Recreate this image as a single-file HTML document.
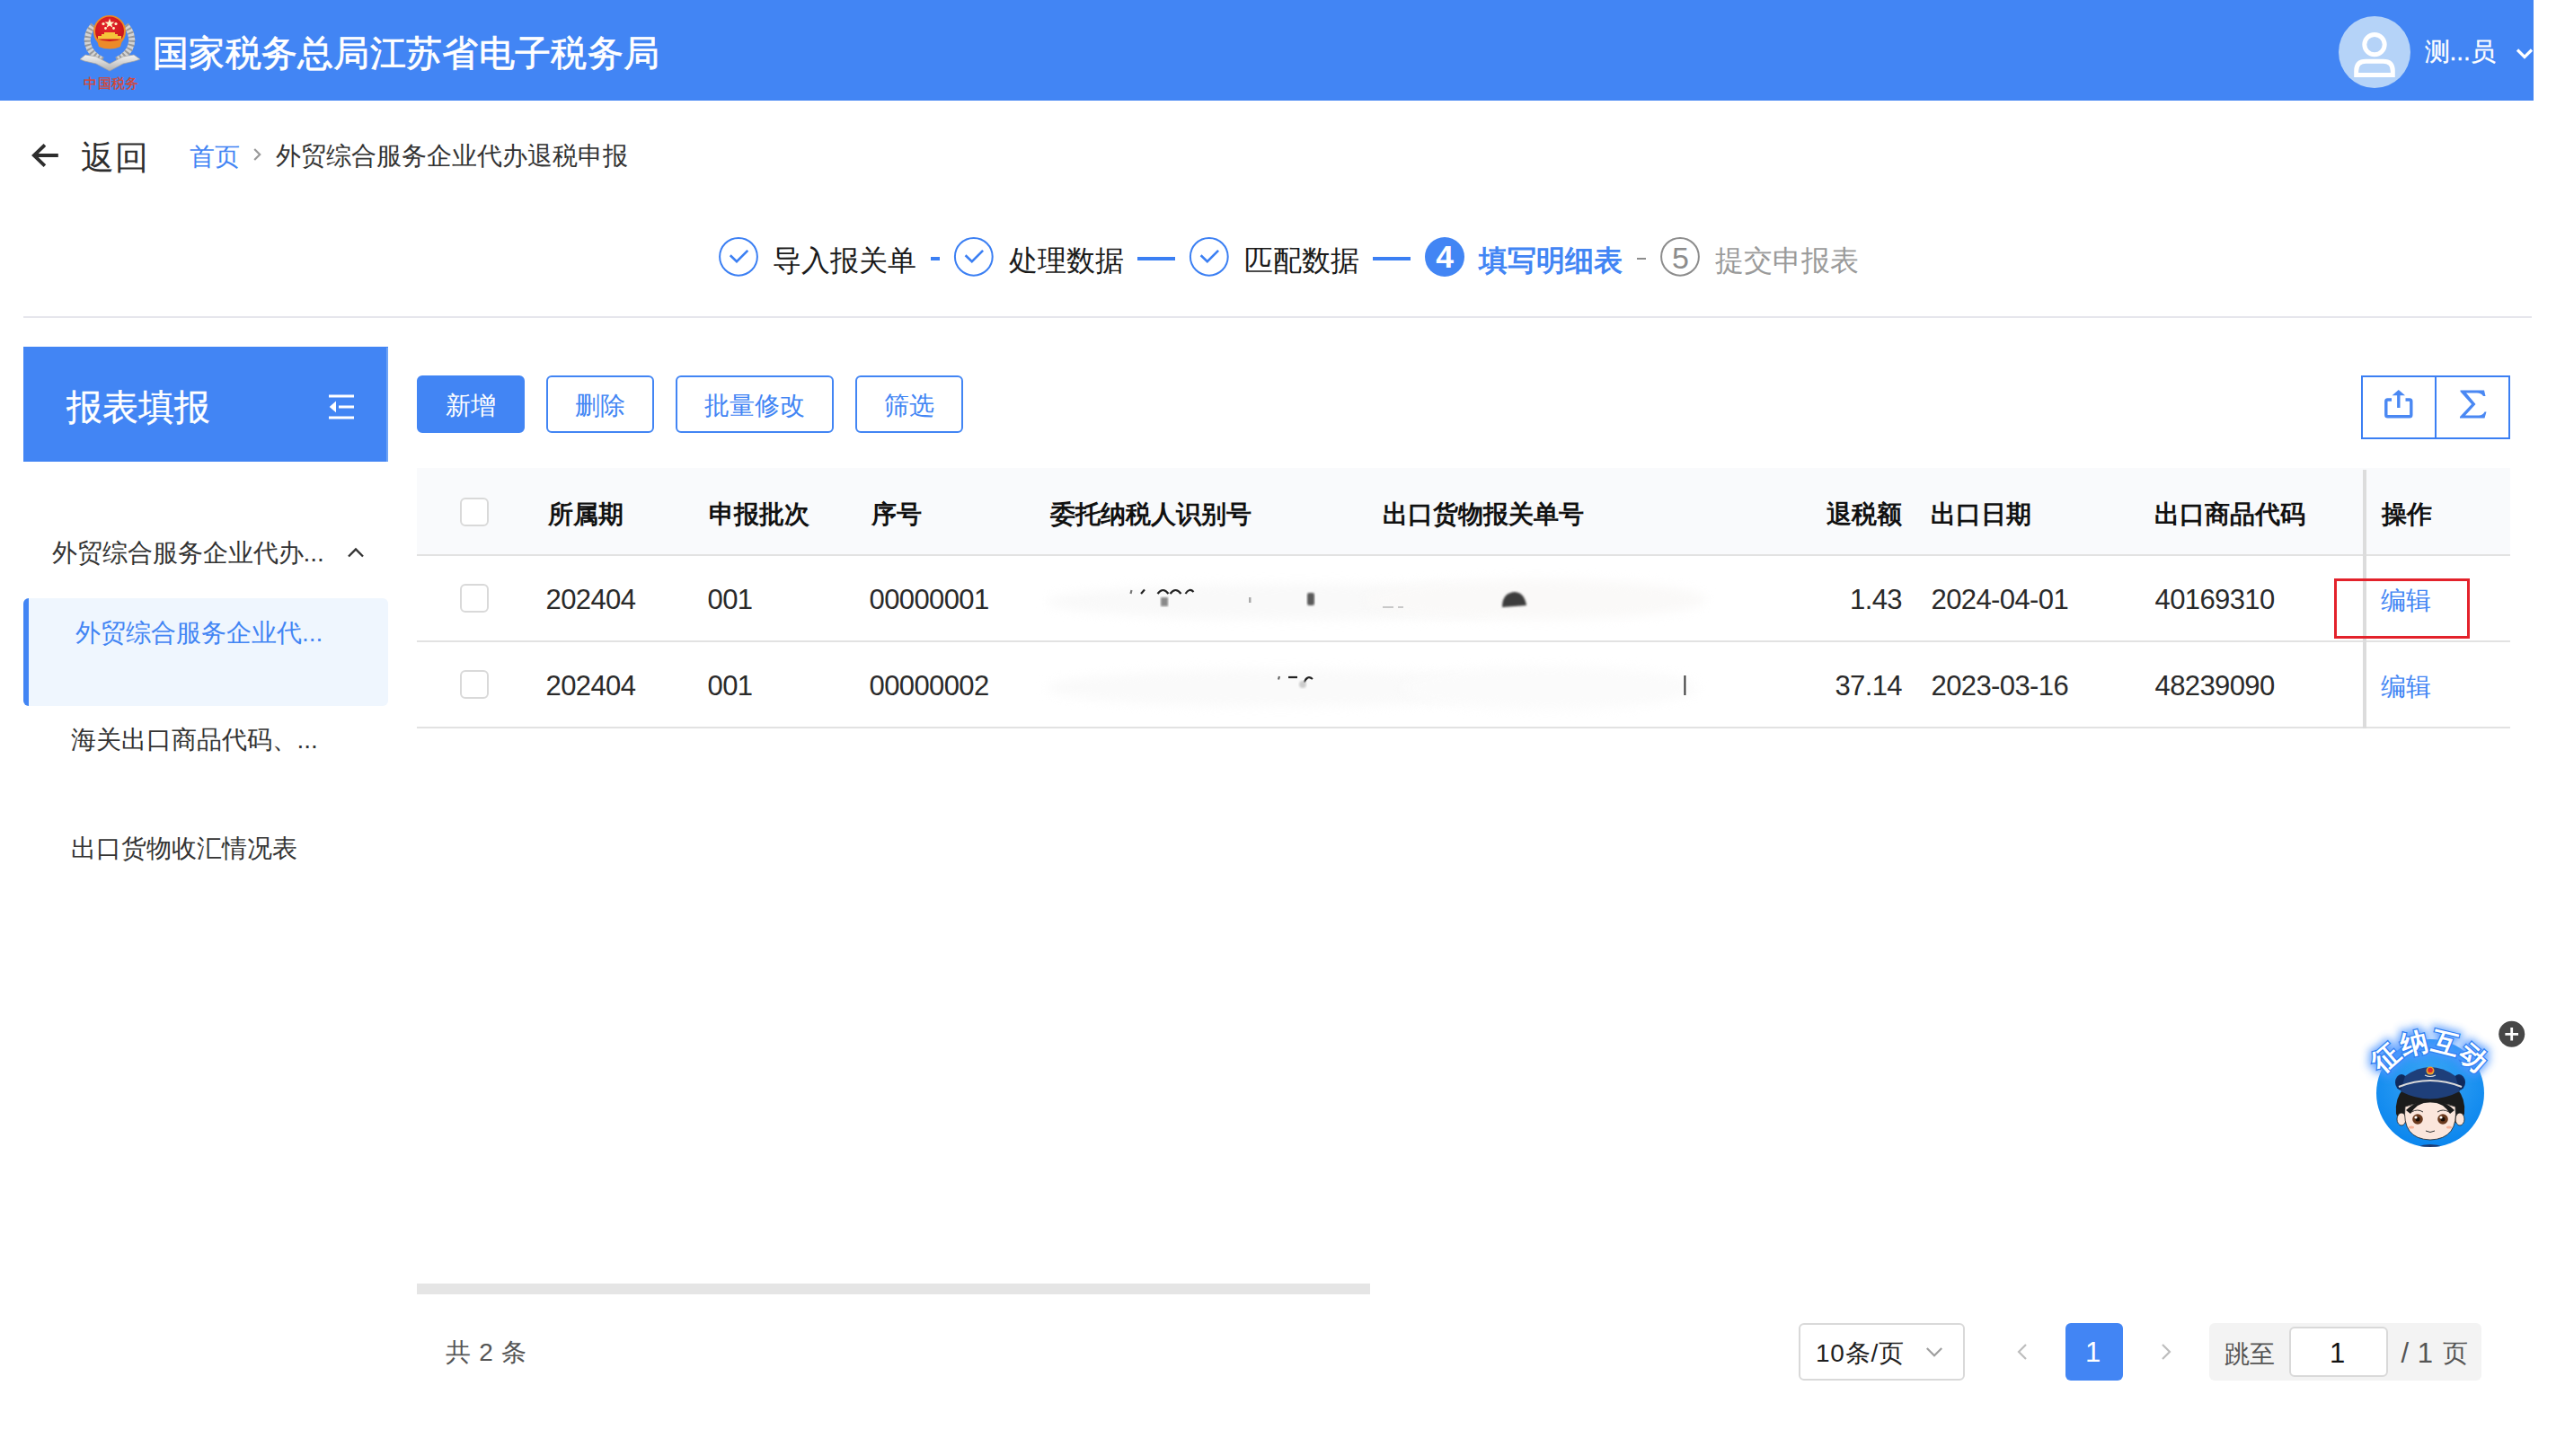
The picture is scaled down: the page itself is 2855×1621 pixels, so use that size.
<!DOCTYPE html>
<html><head><meta charset="utf-8">
<style>
html,body{margin:0;padding:0;background:#fff;}
body{width:2855px;height:1621px;position:relative;overflow:hidden;font-family:"Liberation Sans",sans-serif;color:#333;}
.a{position:absolute;white-space:nowrap;}
svg.a{overflow:visible;}
.t28{font-size:28px;line-height:28px;}
.hdr{left:0;top:0;width:2820px;height:112px;background:#4285f4;}
.btn{position:absolute;top:418px;height:64px;box-sizing:border-box;border:2px solid #4285f4;border-radius:6px;color:#4285f4;font-size:28px;line-height:64px;text-align:center;background:#fff;}
.th{font-size:28px;line-height:28px;font-weight:bold;color:#111;top:559px;}
.td{font-size:31px;line-height:31px;letter-spacing:-0.6px;color:#2a2a2a;}
.cb{position:absolute;left:512px;width:32px;height:32px;box-sizing:border-box;border:2px solid #d9d9d9;border-radius:6px;background:#fff;}
.rowline{position:absolute;left:464px;width:2330px;height:2px;background:#e2e2e2;}
.st{font-size:32px;line-height:32px;color:#1a1a1a;top:273.5px;}
.blob{position:absolute;border-radius:50%;filter:blur(6px);}
</style></head><body>

<!-- ============ header ============ -->
<div class="a hdr"></div>
<!-- emblem -->
<svg class="a" style="left:80px;top:5px" width="90" height="100" viewBox="0 0 90 100">
  <defs>
    <radialGradient id="rg" cx="0.45" cy="0.35" r="0.65"><stop offset="0" stop-color="#e8262c"/><stop offset="1" stop-color="#c5141b"/></radialGradient>
    <linearGradient id="sv" x1="0" y1="0" x2="0" y2="1"><stop offset="0" stop-color="#f4f4f4"/><stop offset="1" stop-color="#b0b0b0"/></linearGradient>
  </defs>
  <path d="M24 23 C13 36 15 53 34 62" fill="none" stroke="#d4d4d4" stroke-width="7"/>
  <path d="M60 23 C71 36 69 53 50 62" fill="none" stroke="#d4d4d4" stroke-width="7"/>
  <path d="M24 23 C13 36 15 53 34 62" fill="none" stroke="#808080" stroke-width="7" stroke-dasharray="2 2.6" opacity="0.7"/>
  <path d="M60 23 C71 36 69 53 50 62" fill="none" stroke="#808080" stroke-width="7" stroke-dasharray="2 2.6" opacity="0.7"/>
  <path d="M9 61 L15 56 L27 58 L42 66 L57 58 L69 56 L76 61 L70 63 L57 66 L42 74 L27 66 L14 63 Z" fill="url(#sv)" stroke="#a0a0a0" stroke-width="0.7"/>
  <circle cx="42" cy="30" r="18" fill="#ef8a24"/>
  <circle cx="42" cy="29.5" r="16" fill="url(#rg)"/>
  <path d="M27.5 38 Q42 44 56.5 38 L54 47 Q42 52 30 47 Z" fill="#ec8a2a"/>
  <path d="M33 33 H51 V35 H55 V38.5 H29 V35 H33 Z" fill="#f5c33a"/>
  <rect x="36" y="31" width="12" height="2" fill="#f5c33a"/>
  <polygon points="42,15.5 43.4,19.5 47.5,19.5 44.2,22 45.4,25.8 42,23.5 38.6,25.8 39.8,22 36.5,19.5 40.6,19.5" fill="#fff7c8"/>
  <circle cx="35" cy="21.5" r="1.6" fill="#fff7c8"/><circle cx="49" cy="21.5" r="1.6" fill="#fff7c8"/>
  <circle cx="37.5" cy="26.5" r="1.4" fill="#fff7c8"/><circle cx="46.5" cy="26.5" r="1.4" fill="#fff7c8"/>
  <text x="44" y="93" text-anchor="middle" font-family="Liberation Serif" font-size="14.5" fill="#d9462e" stroke="#d9462e" stroke-width="0.3" letter-spacing="0.4">中国税务</text>
</svg>
<div class="a" style="left:170px;top:39px;font-size:40px;line-height:40px;color:#fff;letter-spacing:0.3px;-webkit-text-stroke:0.7px #fff;">国家税务总局江苏省电子税务局</div>
<!-- avatar -->
<svg class="a" style="left:2603px;top:18px" width="80" height="80" viewBox="0 0 80 80">
  <circle cx="40" cy="40" r="40" fill="#b5d3f8"/>
  <circle cx="40" cy="31.6" r="11.2" fill="none" stroke="#fff" stroke-width="5"/>
  <path d="M19.7 65.5 V61 Q19.7 50.3 30.4 50.3 H49.6 Q60.3 50.3 60.3 61 V65.5 Z" fill="none" stroke="#fff" stroke-width="5" stroke-linejoin="miter"/>
</svg>
<div class="a" style="left:2698.5px;top:43.5px;font-size:28px;line-height:28px;color:#fff;-webkit-text-stroke:0.3px #fff;">测...员</div>
<svg class="a" style="left:2790px;top:45px" width="30" height="30" viewBox="2790 45 30 30">
  <path d="M2802 55.5 L2810 63.5 L2818 55.5" fill="none" stroke="#fff" stroke-width="3.2"/>
</svg>

<!-- ============ breadcrumb ============ -->
<svg class="a" style="left:25px;top:150px" width="50" height="50" viewBox="25 150 50 50">
  <path d="M37 173 H64.8" fill="none" stroke="#2e2e2e" stroke-width="4"/>
  <path d="M48.5 162.8 L37.8 173 L48.5 183.2" fill="none" stroke="#2e2e2e" stroke-width="3.8" stroke-linecap="square" stroke-linejoin="miter"/>
</svg>
<div class="a" style="left:89.5px;top:157px;font-size:37px;line-height:37px;color:#2e2e2e;letter-spacing:1px;">返回</div>
<div class="a t28" style="left:211px;top:160.5px;color:#4285f4;">首页</div>
<svg class="a" style="left:275px;top:160px" width="20" height="25" viewBox="275 160 20 25">
  <path d="M283.2 166 L289.2 172 L283.2 178" fill="none" stroke="#999" stroke-width="2.2"/>
</svg>
<div class="a t28" style="left:307px;top:159.5px;color:#333;">外贸综合服务企业代办退税申报</div>

<!-- ============ steps ============ -->
<svg class="a" style="left:790px;top:255px" width="1120" height="60" viewBox="790 255 1120 60">
  <g fill="none" stroke="#3b7ff3" stroke-width="2">
    <circle cx="822" cy="285.8" r="20.9"/>
    <circle cx="1083.8" cy="285.8" r="20.9"/>
    <circle cx="1345.8" cy="285.8" r="20.9"/>
  </g>
  <g fill="none" stroke="#3b7ff3" stroke-width="2.6">
    <path d="M812.8 284.2 L820 291.2 L832.3 278.9"/>
    <path d="M1074.6 284.2 L1081.8 291.2 L1094.1 278.9"/>
    <path d="M1336.6 284.2 L1343.8 291.2 L1356.1 278.9"/>
  </g>
  <rect x="1036" y="286" width="10" height="4" fill="#3b7ff3"/>
  <rect x="1266" y="286" width="42" height="4" fill="#3b7ff3"/>
  <rect x="1528" y="286" width="42" height="4" fill="#3b7ff3"/>
  <circle cx="1608" cy="286" r="22" fill="#4285f4"/>
  <rect x="1822" y="287" width="10" height="2" fill="#8c8c8c"/>
  <circle cx="1870" cy="285.8" r="20.9" fill="none" stroke="#8c8c8c" stroke-width="2"/>
</svg>
<div class="a" style="left:1598.3px;top:268.8px;font-size:35.5px;line-height:35.5px;color:#fff;font-weight:bold;">4</div>
<div class="a" style="left:1861px;top:270px;font-size:34px;line-height:34px;color:#8c8c8c;">5</div>
<div class="a st" style="left:859.5px;">导入报关单</div>
<div class="a st" style="left:1122.5px;">处理数据</div>
<div class="a st" style="left:1385px;">匹配数据</div>
<div class="a st" style="left:1646px;color:#4285f4;font-weight:bold;">填写明细表</div>
<div class="a st" style="left:1908.5px;color:#9a9a9a;">提交申报表</div>
<div class="a" style="left:26px;top:352px;width:2792px;height:2px;background:#e6e6ec;"></div>

<!-- ============ sidebar ============ -->
<div class="a" style="left:26px;top:386px;width:406px;height:128px;background:#4285f4;"></div>
<div class="a" style="left:430px;top:387px;width:2px;height:127px;background:#6ea4f6;"></div>
<div class="a" style="left:74px;top:432.5px;font-size:40px;line-height:40px;color:#fff;-webkit-text-stroke:0.4px #fff;">报表填报</div>
<svg class="a" style="left:360px;top:435px" width="40" height="36" viewBox="360 435 40 36">
  <g fill="#fff">
    <rect x="366" y="439.5" width="28" height="3"/>
    <rect x="377" y="451.5" width="17" height="3"/>
    <rect x="366" y="463.5" width="28" height="3"/>
    <polygon points="366.7,453 374,446.6 374,459.2"/>
  </g>
</svg>
<div class="a t28" style="left:57.5px;top:602px;color:#333;">外贸综合服务企业代办...</div>
<svg class="a" style="left:380px;top:600px" width="30" height="25" viewBox="380 600 30 25">
  <path d="M388 619.5 L396 611.5 L404 619.5" fill="none" stroke="#333" stroke-width="2.4"/>
</svg>
<div class="a" style="left:26px;top:666px;width:406px;height:120px;background:#eff6fe;border-radius:6px;overflow:hidden;"><div style="position:absolute;left:0;top:0;width:6px;height:120px;background:#4285f4;"></div></div>
<div class="a t28" style="left:84px;top:690.5px;color:#4285f4;">外贸综合服务企业代...</div>
<div class="a t28" style="left:78.5px;top:809.5px;color:#333;">海关出口商品代码、...</div>
<div class="a t28" style="left:78.5px;top:930.5px;color:#333;">出口货物收汇情况表</div>

<!-- ============ toolbar ============ -->
<div class="btn" style="left:464px;width:120px;background:#4285f4;color:#fff;">新增</div>
<div class="btn" style="left:608px;width:120px;">删除</div>
<div class="btn" style="left:752px;width:176px;">批量修改</div>
<div class="btn" style="left:952px;width:120px;">筛选</div>
<svg class="a" style="left:2620px;top:410px" width="180" height="90" viewBox="2620 410 180 90">
  <rect x="2629" y="419" width="164" height="69" fill="none" stroke="#3b7ff3" stroke-width="2"/>
  <rect x="2710" y="418" width="2" height="71" fill="#3b7ff3"/>
  <g fill="none" stroke="#4a88f3" stroke-width="3.4">
    <path d="M2662 445 H2657.5 Q2655.8 445 2655.8 446.8 V462 Q2655.8 463.8 2657.5 463.8 H2682 Q2683.8 463.8 2683.8 462 V446.8 Q2683.8 445 2682 445 H2677.5"/>
    <path d="M2669.8 454 V438.5"/>
  </g>
  <polygon points="2669.8,434 2677,440.3 2662.6,440.3" fill="#4a88f3"/>
  <path d="M2738.5 434.5 H2765 L2766.5 441 L2764 441 Q2762 437.5 2757 437.5 H2745 L2755.5 450 L2744 462.5 H2759 Q2763.5 462.5 2765.5 458.5 L2767.5 458.5 L2765.5 465.5 H2738 V464 L2751 450 L2738.5 436 Z" fill="#4a88f3"/>
</svg>

<!-- ============ table ============ -->
<div class="a" style="left:464px;top:521px;width:2330px;height:96px;background:#f9fafc;"></div>
<div class="rowline" style="top:617px;"></div>
<div class="rowline" style="top:713px;"></div>
<div class="rowline" style="top:809px;"></div>
<div class="a" style="left:2630px;top:523px;width:4px;height:288px;background:#dcdcdc;"></div>
<div class="cb" style="top:554px;"></div>
<div class="cb" style="top:650px;"></div>
<div class="cb" style="top:746px;"></div>

<div class="a th" style="left:609.5px;">所属期</div>
<div class="a th" style="left:788.5px;">申报批次</div>
<div class="a th" style="left:969.5px;">序号</div>
<div class="a th" style="left:1169px;">委托纳税人识别号</div>
<div class="a th" style="left:1538.5px;">出口货物报关单号</div>
<div class="a th" style="left:2032.5px;">退税额</div>
<div class="a th" style="left:2148.5px;">出口日期</div>
<div class="a th" style="left:2398px;">出口商品代码</div>
<div class="a th" style="left:2651px;">操作</div>

<!-- redacted blur row1 -->
<div class="blob" style="left:1165px;top:650px;width:560px;height:40px;background:#f9f9f9;"></div>
<div class="blob" style="left:1520px;top:645px;width:380px;height:45px;background:#faf9f8;"></div>
<div class="blob" style="left:1165px;top:745px;width:520px;height:42px;background:#fafafa;"></div>
<div class="blob" style="left:1560px;top:742px;width:330px;height:48px;background:#fbfbfb;"></div>

<svg class="a" style="left:1240px;top:640px" width="660" height="150" viewBox="1240 640 660 150">
  <defs><filter id="bl1"><feGaussianBlur stdDeviation="1"/></filter><filter id="bl2"><feGaussianBlur stdDeviation="0.6"/></filter></defs>
  <g fill="none" stroke="#222" stroke-width="2.2" filter="url(#bl2)">
    <path d="M1258.5 661 L1259.5 657" stroke="#777"/>
    <path d="M1270 661 L1274 656.5"/>
    <path d="M1288.5 661 Q1294.5 653 1300.5 661"/>
    <path d="M1302.5 661 Q1308.5 653 1314.5 661"/>
    <path d="M1319.5 661 Q1324 654 1328.5 659"/>
    <path d="M1423 756.5 L1424 753" stroke="#666"/>
    <path d="M1434 754 H1444"/>
    <path d="M1451.5 760 Q1455 751 1461 756"/>
  </g>
  <rect x="1292" y="665" width="8" height="10" fill="#8a8a8a" filter="url(#bl1)"/>
  <rect x="1390" y="665" width="2.5" height="6" fill="#aaa" filter="url(#bl2)"/>
  <rect x="1455" y="660" width="8" height="14" rx="2" fill="#5a5a5a" filter="url(#bl1)"/>
  <path d="M1672 676 Q1672 660 1686 659 Q1697 660 1699 674 Z" fill="#3c3c3c" filter="url(#bl1)"/>
  <rect x="1539" y="675" width="12" height="2" fill="#c8c8c8"/>
  <rect x="1556" y="675" width="6" height="2" fill="#c8c8c8"/>
  <path d="M1875.4 752 L1875.4 774" stroke="#222" stroke-width="2" opacity="0.9"/>
  <circle cx="1450" cy="762" r="4" fill="#ccc" filter="url(#bl1)"/>
</svg>
<div class="a td" style="left:607.5px;top:652px;">202404</div>
<div class="a td" style="left:787.5px;top:652px;">001</div>
<div class="a td" style="left:967.5px;top:652px;">00000001</div>
<div class="a td" style="left:2117px;top:652px;transform:translateX(-100%);">1.43</div>
<div class="a td" style="left:2149.5px;top:652px;">2024-04-01</div>
<div class="a td" style="left:2398.5px;top:652px;">40169310</div>
<div class="a t28" style="left:2650px;top:655px;color:#4285f4;">编辑</div>

<div class="a td" style="left:607.5px;top:748px;">202404</div>
<div class="a td" style="left:787.5px;top:748px;">001</div>
<div class="a td" style="left:967.5px;top:748px;">00000002</div>
<div class="a td" style="left:2117px;top:748px;transform:translateX(-100%);">37.14</div>
<div class="a td" style="left:2149.5px;top:748px;">2023-03-16</div>
<div class="a td" style="left:2398.5px;top:748px;">48239090</div>
<div class="a t28" style="left:2650px;top:751px;color:#4285f4;">编辑</div>

<div class="a" style="left:2598px;top:644px;width:151px;height:67px;box-sizing:border-box;border:3px solid #e3222b;"></div>

<!-- ============ scrollbar / pagination ============ -->
<div class="a" style="left:464px;top:1429px;width:1061px;height:12px;background:#e5e5e5;"></div>
<div class="a t28" style="left:496px;top:1492px;color:#555;word-spacing:1.5px;">共 2 条</div>

<!-- pager -->
<div class="a" style="left:2002px;top:1473px;width:185px;height:64px;box-sizing:border-box;border:2px solid #d9d9d9;border-radius:6px;background:#fff;"></div>
<div class="a" style="left:2021px;top:1492.5px;font-size:28px;line-height:28px;color:#1f1f1f;letter-spacing:0.8px;">10条/页</div>
<svg class="a" style="left:2135px;top:1490px" width="35" height="30" viewBox="2135 1490 35 30">
  <path d="M2144.8 1501 L2153 1509.2 L2161.2 1501" fill="none" stroke="#9e9e9e" stroke-width="2.2"/>
</svg>
<svg class="a" style="left:2235px;top:1490px" width="200" height="30" viewBox="2235 1490 200 30">
  <path d="M2255 1497 L2247 1505 L2255 1513" fill="none" stroke="#bdbdbd" stroke-width="2.2"/>
  <path d="M2407 1497 L2415 1505 L2407 1513" fill="none" stroke="#bdbdbd" stroke-width="2.2"/>
</svg>
<div class="a" style="left:2299px;top:1473px;width:64px;height:64px;border-radius:6px;background:#4285f4;"></div>
<div class="a" style="left:2321px;top:1490px;font-size:31px;line-height:31px;color:#fff;">1</div>
<div class="a" style="left:2459px;top:1473px;width:303px;height:64px;border-radius:6px;background:#f3f3f3;"></div>
<div class="a t28" style="left:2475.5px;top:1493.5px;color:#555;">跳至</div>
<div class="a" style="left:2548px;top:1477px;width:110px;height:56px;box-sizing:border-box;border:2px solid #d9d9d9;border-radius:6px;background:#fff;"></div>
<div class="a" style="left:2593px;top:1490.5px;font-size:31px;line-height:31px;color:#111;">1</div>
<div class="a" style="left:2672.5px;top:1491px;font-size:31px;line-height:31px;color:#555;word-spacing:1px;">/ 1 </div>
<div class="a t28" style="left:2718.5px;top:1493px;color:#555;">页</div>

<!-- chatbot -->
<svg class="a" style="left:2620px;top:1120px" width="200" height="170" viewBox="2620 1120 200 170">
  <defs>
    <radialGradient id="bg1" cx="0.5" cy="0.35" r="0.65"><stop offset="0" stop-color="#3aa6f5"/><stop offset="1" stop-color="#0b86ee"/></radialGradient>
    <filter id="glow" x="-30%" y="-60%" width="160%" height="220%"><feGaussianBlur stdDeviation="5"/></filter>
    <clipPath id="cc"><circle cx="2705" cy="1217" r="60"/></clipPath>
    <path id="arc" d="M2641 1233 A63.5 63.5 0 0 1 2768 1233"/>
  </defs>
  <circle cx="2705" cy="1217" r="60" fill="url(#bg1)"/>
  <g clip-path="url(#cc)">
    <!-- collar -->
    <path d="M2670 1290 Q2705 1262 2740 1290 Z" fill="#bfe0fb"/>
    <path d="M2680 1282 Q2705 1266 2730 1282 L2730 1290 L2680 1290 Z" fill="#1e3b72"/>
    <!-- hair -->
    <path d="M2667 1240 Q2664 1205 2705 1200 Q2746 1205 2743 1240 L2738 1250 L2672 1250 Z" fill="#1b1b1b"/>
    <!-- ears -->
    <ellipse cx="2673" cy="1246" rx="5" ry="7" fill="#fbe4d8" stroke="#222" stroke-width="0.8"/>
    <ellipse cx="2738" cy="1246" rx="5" ry="7" fill="#fbe4d8" stroke="#222" stroke-width="0.8"/>
    <!-- face -->
    <path d="M2677 1232 Q2705 1222 2733 1232 Q2737 1268 2705 1269 Q2673 1268 2677 1232 Z" fill="#fbe6dc" stroke="#222" stroke-width="0.8"/>
    <path d="M2678 1236 Q2690 1224 2705 1226 Q2690 1228 2683 1240 Z" fill="#1b1b1b"/>
    <path d="M2732 1236 Q2720 1224 2705 1226 Q2720 1228 2727 1240 Z" fill="#1b1b1b"/>
    <!-- eyes -->
    <circle cx="2691" cy="1246" r="5.8" fill="#6b3a1e"/><circle cx="2719" cy="1246" r="5.8" fill="#6b3a1e"/>
    <circle cx="2691" cy="1246" r="2.5" fill="#1a0d05"/><circle cx="2719" cy="1246" r="2.5" fill="#1a0d05"/>
    <circle cx="2689" cy="1244" r="1.6" fill="#fff"/><circle cx="2717" cy="1244" r="1.6" fill="#fff"/>
    <path d="M2684 1238 Q2691 1234 2697 1238" fill="none" stroke="#333" stroke-width="1"/>
    <path d="M2713 1238 Q2719 1234 2726 1238" fill="none" stroke="#333" stroke-width="1"/>
    <ellipse cx="2684" cy="1255" rx="3" ry="1.5" fill="#f7b39a"/><ellipse cx="2726" cy="1255" rx="3" ry="1.5" fill="#f7b39a"/>
    <path d="M2700 1259 Q2705 1262 2710 1259" fill="none" stroke="#333" stroke-width="1"/>
  </g>
  <!-- hat -->
  <ellipse cx="2673" cy="1205" rx="7" ry="9" fill="#102a5c"/>
  <ellipse cx="2737" cy="1205" rx="7" ry="9" fill="#102a5c"/>
  <path d="M2677 1198 Q2705 1178 2733 1198 L2738 1215 Q2705 1232 2672 1215 Z" fill="#1e3f7a"/>
  <path d="M2670 1210 Q2705 1196 2740 1210" fill="none" stroke="#d9d9d9" stroke-width="2.2"/>
  <circle cx="2705" cy="1192" r="4.5" fill="#e8a22a"/><circle cx="2705" cy="1191.5" r="2.8" fill="#d8262a"/>
  <path d="M2699 1197 Q2705 1200 2711 1197" fill="none" stroke="#ddd" stroke-width="1.2"/>
  <!-- arc text -->
  <text font-size="30" font-weight="bold" fill="#4f97ff" stroke="#4f97ff" stroke-width="7" filter="url(#glow)" font-family="Liberation Sans" opacity="0.9"><textPath href="#arc" startOffset="50%" text-anchor="middle" letter-spacing="0.5">征纳互动</textPath></text>
  <text font-size="30" font-weight="bold" fill="#fff" stroke="#2f7ff2" stroke-width="2.5" paint-order="stroke" font-family="Liberation Sans"><textPath href="#arc" startOffset="50%" text-anchor="middle" letter-spacing="0.5">征纳互动</textPath></text>
  <!-- plus -->
  <circle cx="2795.7" cy="1151.3" r="14.5" fill="#474747"/>
  <path d="M2795.7 1144 V1158.6 M2788.4 1151.3 H2803" stroke="#fff" stroke-width="2.8"/>
</svg>

</body></html>
